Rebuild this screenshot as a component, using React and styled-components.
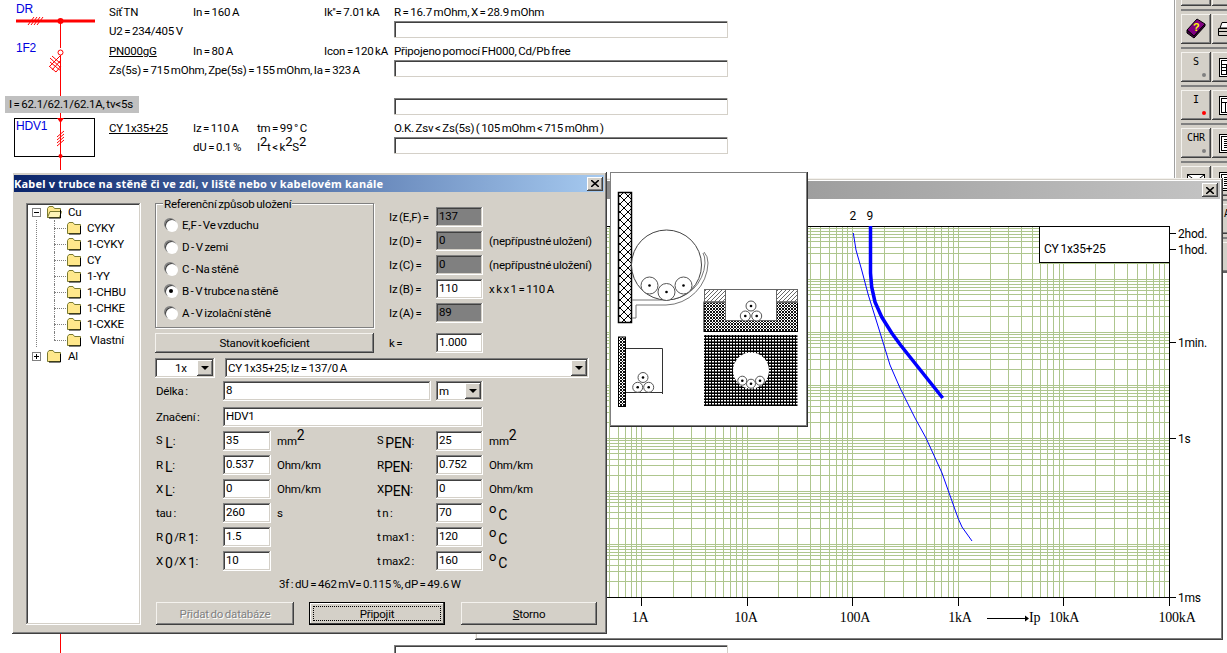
import React from "react";
import styled, { createGlobalStyle } from "styled-components";

const GlobalStyle = createGlobalStyle`
  html, body {
    margin: 0;
    width: 1227px;
    height: 653px;
    overflow: hidden;
    background: #fff;
  }
  * { box-sizing: border-box; }
`;

const FACE = "#d4d0c8";
const RAISED = `inset -1px -1px #404040, inset 1px 1px #f4f2ee, inset -2px -2px #808080, inset 2px 2px ${FACE}`;
const SUNKEN = `inset -1px -1px #fff, inset 1px 1px #808080, inset -2px -2px ${FACE}, inset 2px 2px #404040`;

const Page = styled.div`
  position: relative;
  display: flex;
  width: 1227px;
  height: 653px;
  overflow: hidden;
  background: #fff;
  color: #000;
  font: 11.5px/16px Roboto, "Liberation Sans", Arial, sans-serif;
  letter-spacing: -0.2px;
  word-spacing: -1px;
`;

/* ---------- schema behind the windows ---------- */

const SchemaSvg = styled.svg`
  flex: none;
  display: block;
  width: 109px;
  height: 653px;
`;

const SchemaName = styled.text`
  font: 12px "Liberation Sans", Arial, sans-serif;
  fill: #0000e0;
`;

const CurrentBadge = styled.div`
  position: absolute;
  left: 5px;
  top: 96px;
  width: 134px;
  height: 17px;
  padding-left: 4px;
  background: #c0c0c0;
  line-height: 17px;
  white-space: nowrap;
`;

const SchemaColumn = styled.div`
  flex: none;
  width: 619px;
`;

const SchemaTable = styled.div`
  display: grid;
  grid-template-rows: 39px 38px 39px 39px;
  padding-top: 3px;
`;

const Block = styled.div`
  display: grid;
  grid-template-columns: 84px 64px 67px 70px 334px;
  grid-template-rows: 19px 19px;
  line-height: 19px;
  white-space: nowrap;
`;

const Wide = styled.span`
  grid-column: 1 / 5;
`;

const Cell = styled.span`
  grid-column: ${(p) => p.$col || "auto"};
`;

const LineField = styled.div`
  height: 17px;
  margin-top: -1px;
  background: #fff;
  box-shadow: inset -1px -1px ${FACE}, inset 1px 1px #808080, inset 2px 2px #404040;
  grid-column: 5;
`;

const LastField = styled(LineField)`
  width: 334px;
  margin: 487px 0 0 285px;
`;

const Sup = styled.sup`
  font-size: ${(p) => p.$size || 12}px;
  line-height: 0;
  vertical-align: ${(p) => p.$up || 5}px;
`;

/* ---------- right toolbar ---------- */

const Toolbar = styled.div`
  flex: none;
  width: 53px;
  height: 273px;
  margin-left: auto;
  padding: 0 0 0 6px;
  overflow: hidden;
  background: ${FACE};
  border-left: 1px solid #a0a0a0;
  border-bottom: 2px solid #606060;
  box-shadow: inset 1px 0 #fff;
`;

const ToolRow = styled.div`
  display: flex;
  gap: 1px;
  height: 38px;
  padding: 3px 0 0;
  border-top: 2px solid #808080;
  &:first-child {
    margin-top: -29px;
  }
`;

const ToolButton = styled.div`
  position: relative;
  display: flex;
  flex: none;
  flex-direction: column;
  align-items: center;
  width: 30px;
  height: 30px;
  padding-top: 4px;
  background: ${FACE};
  box-shadow: ${RAISED};
  letter-spacing: 0;
  font: 10px/12px "DejaVu Sans Mono", "Liberation Mono", monospace;
`;

const ToolDot = styled.span`
  position: absolute;
  right: 5px;
  bottom: 5px;
  width: 4px;
  height: 4px;
  border-radius: 50%;
  background: ${(p) => p.$color};
`;

const BookIcon = () => (
  <svg width="22" height="22" viewBox="0 0 22 22" style={{ marginTop: -1 }}>
    <path d="M2 13 L12 2 L20 7 L9 19 Z" fill="#800080" stroke="#000" />
    <path d="M2 13 L2 16 L9 21 L20 9 L20 7 L9 19 Z" fill="#400040" stroke="#000" />
    <text x="8" y="14" fontSize="11" fontWeight="700" fontFamily="Liberation Sans" fill="#ffff00">?</text>
  </svg>
);

const PrinterIcon = () => (
  <svg width="24" height="22" viewBox="0 0 24 22">
    <path d="M7 4.500 H19 L17 10 H5 Z" fill="#fff" stroke="#000" />
    <path d="M3.500 10.500 H21.500 V17.500 H3.500 Z" fill={FACE} stroke="#000" />
    <path d="M4 13.500 H21" stroke="#000" />
    <path d="M14 15.500 H21" stroke="#e0e000" strokeWidth="2" />
  </svg>
);

const SheetIcon = ({ kind }) => (
  <svg width="22" height="22" viewBox="0 0 22 22">
    <rect x="3.5" y="2.5" width="16" height="18" fill="#fff" stroke="#000" />
    <rect x="5.5" y="4.5" width="12" height="14" fill="none" stroke="#000" />
    {kind === "table" && <path d="M6 8.500 H17 M6 11.500 H17 M6 14.500 H17 M10.500 8 V18 M14.500 8 V18" stroke="#000" />}
    {kind === "pi" && <path d="M6 8.500 H17 M9.500 8 V18 M13.500 8 V18" stroke="#000" />}
    {kind === "list" && <path d="M8 7.500 H17 M8 9.500 H17 M8 11.500 H17 M8 13.500 H17 M8 15.500 H17" stroke="#000" />}
  </svg>
);

const MailIcon = () => (
  <svg width="22" height="22" viewBox="0 0 22 22">
    <rect x="2.500" y="4.500" width="17" height="11" fill="#fff" stroke="#000" />
    <path d="M3 5 L11 11 L19 5 M3 15 L9 9 M19 15 L13 9" stroke="#000" fill="none" />
  </svg>
);

const toolRows = [
  [<ToolButton key="a" />, <ToolButton key="b" />],
  [<ToolButton key="a"><BookIcon /></ToolButton>, <ToolButton key="b"><PrinterIcon /></ToolButton>],
  [<ToolButton key="a">S<ToolDot $color="#808080" /></ToolButton>, <ToolButton key="b"><SheetIcon kind="table" /></ToolButton>],
  [<ToolButton key="a">I<ToolDot $color="#ff0000" /></ToolButton>, <ToolButton key="b"><SheetIcon kind="pi" /></ToolButton>],
  [<ToolButton key="a">CHR<ToolDot $color="#808080" /></ToolButton>, <ToolButton key="b"><SheetIcon kind="list" /></ToolButton>],
  [<ToolButton key="a"><MailIcon /></ToolButton>, <ToolButton key="b"><SheetIcon kind="list" /></ToolButton>],
  [<ToolButton key="a" />, <ToolButton key="b">A</ToolButton>],
  [<ToolButton key="a" />, <ToolButton key="b" />],
];

/* ---------- window chrome ---------- */

const ChartWindow = styled.div`
  position: absolute;
  left: 475px;
  top: 178px;
  width: 748px;
  height: 462px;
  padding: 3px;
  background: #fff;
  box-shadow: ${RAISED};
`;

const InactiveTitle = styled.div`
  display: flex;
  justify-content: flex-end;
  align-items: center;
  height: 18px;
  padding-right: 2px;
  background: linear-gradient(90deg, #808080, #c4c4c4);
`;

const CloseButton = styled.button`
  display: flex;
  align-items: center;
  justify-content: center;
  width: 16px;
  height: 14px;
  padding: 0;
  border: 0;
  background: ${FACE};
  box-shadow: inset -1px -1px #404040, inset 1px 1px #fff, inset -2px -2px #808080;
`;

const ChartSvg = styled.svg`
  display: block;
  width: 742px;
  height: 438px;
`;

const AxisLabel = styled.text`
  font: 14px "Liberation Serif", "Times New Roman", serif;
  text-anchor: ${(p) => p.$anchor || "middle"};
`;

const TimeLabel = styled.text`
  font: 12px Roboto, "Liberation Sans", Arial, sans-serif;
`;

const PictureWindow = styled.div`
  position: absolute;
  left: 610px;
  top: 172px;
  width: 198px;
  height: 255px;
  padding: 2px;
  background: #fff;
  box-shadow: inset -1px -1px #303030, inset 1px 1px #808080, inset -2px -2px #808080;
`;

const PictureSvg = styled.svg`
  display: block;
  width: 194px;
  height: 251px;
`;

const Dialog = styled.div`
  position: absolute;
  left: 12px;
  top: 172px;
  width: 595px;
  height: 462px;
  padding: 3px 3px 0 2px;
  background: ${FACE};
  box-shadow: inset -1px -1px #404040, inset 1px 1px #fff, inset -2px -2px #808080;
`;

const ActiveTitle = styled.div`
  display: flex;
  align-items: center;
  justify-content: space-between;
  height: 17px;
  padding: 0 1px 0 0;
  background: linear-gradient(90deg, #0a246a, #a6caf0);
  color: #fff;
  letter-spacing: 0.2px;
  word-spacing: 0;
  font: 700 11px/17px "Noto Sans", Tahoma, sans-serif;
  white-space: nowrap;
`;

const DialogBody = styled.div`
  display: flex;
  gap: 14px;
  padding: 9px 0 0 12px;
`;

/* ---------- tree ---------- */

const Tree = styled.div`
  flex: none;
  width: 115px;
  height: 422px;
  margin-top: 2px;
  padding-top: 1px;
  background: #fff;
  box-shadow: ${SUNKEN};
`;

const TreeRow = styled.div`
  position: relative;
  display: flex;
  align-items: center;
  height: 16px;
  padding-left: ${(p) => (p.$child ? 40 : 20)}px;
  white-space: nowrap;
  background-image: ${(p) => (p.$child ? "linear-gradient(#808080 50%, transparent 0)" : "none")};
  background-size: 1px 2px;
  background-position: 10px 0;
  background-repeat: repeat-y;
  &::before {
    content: "";
    display: ${(p) => (p.$child ? "block" : "none")};
    position: absolute;
    left: 28px;
    top: 0;
    width: 12px;
    height: ${(p) => (p.$last ? 8 : 16)}px;
    border-left: 1px dotted #808080;
  }
  &::after {
    content: "";
    display: ${(p) => (p.$child ? "block" : "none")};
    position: absolute;
    left: 28px;
    top: 8px;
    width: 12px;
    border-top: 1px dotted #808080;
  }
`;

const Expander = styled.span`
  position: absolute;
  left: 6px;
  top: 4px;
  width: 9px;
  height: 9px;
  border: 1px solid #808080;
  background: #fff;
  &::before {
    content: "";
    position: absolute;
    left: 1px;
    top: 3px;
    width: 5px;
    height: 1px;
    background: #000;
  }
  &::after {
    content: "";
    display: ${(p) => (p.$plus ? "block" : "none")};
    position: absolute;
    left: 3px;
    top: 1px;
    width: 1px;
    height: 5px;
    background: #000;
  }
`;

const FolderName = styled.span`
  margin-left: ${(p) => p.$gap}px;
`;

const Folder = ({ open }) => (
  <svg width="16" height="14" viewBox="0 0 16 14">
    <path d="M1.500 3.500 L3 1.500 H7 L8.500 3.500 H14.500 V12.500 H1.500 Z" fill="#ffe88c" stroke="#7a7a30" />
    {open && <path d="M1.500 12.500 L4 6.500 H15.500 L13.500 12.500 Z" fill="#fff4b8" stroke="#7a7a30" />}
    <path d="M14.500 5 V13 H3" stroke="#000" fill="none" />
  </svg>
);

/* ---------- form bits ---------- */

const RightCol = styled.div`
  flex: none;
  width: 442px;
`;

const TopArea = styled.div`
  display: flex;
  gap: 15px;
  height: 152px;
`;

const GroupCol = styled.div`
  flex: none;
  width: 219px;
  padding-top: 2px;
`;

const Group = styled.div`
  position: relative;
  height: 125px;
  padding: 10px 0 0 9px;
  border: 1px solid #808080;
  box-shadow: inset 1px 1px #fff, 1px 1px #fff;
`;

const GroupTitle = styled.span`
  position: absolute;
  left: 7px;
  top: -8px;
  padding: 0 1px;
  background: ${FACE};
`;

const RadioRow = styled.div`
  display: flex;
  align-items: center;
  gap: 5px;
  height: 22px;
  white-space: nowrap;
`;

const Radio = styled.span`
  display: flex;
  align-items: center;
  justify-content: center;
  flex: none;
  width: 12px;
  height: 12px;
  border-radius: 50%;
  background: #fff;
  box-shadow: -1px -1px #808080, 1px 1px #fff, inset 1px 1px 0 #404040;
  &::after {
    content: "";
    display: ${(p) => (p.$on ? "block" : "none")};
    width: 4px;
    height: 4px;
    border-radius: 50%;
    background: #000;
  }
`;

const RaisedButton = styled.button`
  display: block;
  width: ${(p) => p.$w}px;
  height: ${(p) => p.$h}px;
  padding: 0;
  border: 0;
  background: ${FACE};
  color: #000;
  font: inherit;
  letter-spacing: inherit;
  word-spacing: inherit;
  box-shadow: ${RAISED};
`;

const KoefButton = styled(RaisedButton)`
  margin-top: 5px;
`;

const DisabledButton = styled(RaisedButton)`
  color: #808080;
  text-shadow: 1px 1px #fff;
`;

const DefaultButton = styled(RaisedButton)`
  position: relative;
  outline: 1px solid #000;
  outline-offset: -1px;
  box-shadow: inset -2px -2px #404040, inset 2px 2px #fff;
  &::after {
    content: "";
    position: absolute;
    inset: 4px;
    border: 1px dotted #000;
  }
`;

const IzGrid = styled.div`
  display: grid;
  grid-template-columns: 47px 47px auto;
  grid-auto-rows: 20px;
  row-gap: 4px;
  align-items: center;
  padding-top: 6px;
  white-space: nowrap;
`;

const KRow = styled(IzGrid)`
  padding-top: 10px;
`;

const Hint = styled.span`
  padding-left: 6px;
`;

const Field = styled.div`
  width: ${(p) => (p.$w ? `${p.$w}px` : "100%")};
  height: 20px;
  padding: 2px 3px;
  background: ${(p) => (p.$off ? "#808080" : "#fff")};
  box-shadow: ${SUNKEN};
  line-height: 15px;
  white-space: nowrap;
`;

const ComboBox = styled.div`
  display: flex;
  align-items: center;
  justify-content: space-between;
  flex: none;
  width: ${(p) => p.$w}px;
  height: 20px;
  padding: 2px 2px 2px ${(p) => p.$indent || 3}px;
  background: #fff;
  box-shadow: ${SUNKEN};
  white-space: nowrap;
`;

const ComboArrow = styled.span`
  display: flex;
  align-items: center;
  justify-content: center;
  flex: none;
  width: 16px;
  height: 16px;
  background: ${FACE};
  box-shadow: inset -1px -1px #404040, inset 1px 1px #fff, inset -2px -2px #808080;
  &::after {
    content: "";
    border: 4px solid transparent;
    border-top: 4px solid #000;
    border-bottom: 0;
  }
`;

const SelectRow = styled.div`
  display: flex;
  gap: 10px;
  margin-top: 5px;
`;

const FormRow = styled.div`
  display: flex;
  align-items: center;
  margin-top: ${(p) => p.$top}px;
`;

const RowLabel = styled.span`
  flex: none;
  width: 68px;
  padding-left: 1px;
`;

const ParamGrid = styled.div`
  display: grid;
  grid-template-columns: 68px 48px 106px 59px 47px auto;
  grid-auto-rows: 20px;
  row-gap: 4px;
  align-items: center;
  margin-top: 4px;
  white-space: nowrap;
`;

const ParamLabel = styled.span`
  padding-left: 1px;
`;

const Unit = styled.span`
  padding-left: 6px;
`;

const Big = styled.span`
  margin-left: ${(p) => p.$gap ?? 2}px;
  font-size: 14px;
  line-height: 0;
  vertical-align: -3px;
`;

const Summary = styled.div`
  height: 18px;
  margin-top: 4px;
  padding-left: 124px;
  line-height: 18px;
  white-space: nowrap;
`;

const ButtonBar = styled.div`
  display: flex;
  margin: 9px 0 0 1px;
`;

const Spacer = styled.div`
  width: ${(p) => p.$w}px;
  flex: none;
`;

/* ---------- data ---------- */

const folders = ["CYKY", "1-CYKY", "CY", "1-YY", "1-CHBU", "1-CHKE", "1-CXKE", "Vlastní"];

const methods = [
  { text: "E,F - Ve vzduchu" },
  { text: "D - V zemi" },
  { text: "C - Na stěně" },
  { text: "B - V trubce na stěně", on: true },
  { text: "A - V izolační stěně" },
];

const izRows = [
  { label: "Iz (E,F) =", value: "137", off: true },
  { label: "Iz (D) =", value: "0", off: true, hint: "(nepřípustné uložení)" },
  { label: "Iz (C) =", value: "0", off: true, hint: "(nepřípustné uložení)" },
  { label: "Iz (B) =", value: "110", hint: "x k x 1 = 110 A" },
  { label: "Iz (A) =", value: "89", off: true },
];

const deg = (
  <>
    <Sup $size={13} $up={4}>o</Sup><Big>C</Big>
  </>
);

const mm2 = (
  <>
    mm<Sup $size={14}>2</Sup>
  </>
);

const params = [
  { l: <><Sup $size={11} $up={1}>S</Sup><Big $gap={3}>L</Big>:</>, v: "35", u: mm2, r: <><Sup $size={11} $up={1}>S</Sup><Big>PEN</Big>:</>, rv: "25", ru: mm2 },
  { l: <>R<Big>L</Big>:</>, v: "0.537", u: "Ohm/km", r: <>R<Big $gap={0}>PEN</Big>:</>, rv: "0.752", ru: "Ohm/km" },
  { l: <>X<Big>L</Big>:</>, v: "0", u: "Ohm/km", r: <>X<Big $gap={0}>PEN</Big>:</>, rv: "0", ru: "Ohm/km" },
  { l: "tau :", v: "260", u: "s", r: "t n :", rv: "70", ru: deg },
  { l: <>R<Big>0</Big> /R<Big>1</Big>:</>, v: "1.5", r: "t max1 :", rv: "120", ru: deg },
  { l: <>X<Big>0</Big> /X<Big>1</Big>:</>, v: "10", r: "t max2 :", rv: "160", ru: deg },
];

/* ---------- chart ---------- */

const xOf = (amps) => Math.round(641 + 105.6 * Math.log10(amps));
const yOf = (secs) => Math.round(437.5 - 53 * Math.log10(secs));

const gridX = [];
for (let e = -2; e < 5; e++) {
  for (let m = 1; m < 10; m++) gridX.push(xOf(m * 10 ** e));
}
gridX.push(xOf(1e5));

const gridY = [];
for (let e = -3; e < 4; e++) {
  for (let m = 1; m < 10; m++) gridY.push(yOf(m * 10 ** e));
}

const thickCurve = "870.500,226 870.500,273 871.700,287 875,302 881.700,317 891.700,333 900.500,345 910,357 926.700,378 942.700,398";
const thinCurve = "853.300,233 856,250 861.700,270 868.300,295 878.300,327 890,365 900,388 915,418 926,438 942,473 958,518 962,527 972,541";

const xLabels = [
  { x: 640, t: "1A" },
  { x: 746, t: "10A" },
  { x: 855, t: "100A" },
  { x: 960, t: "1kA" },
  { x: 1064, t: "10kA" },
  { x: 1177, t: "100kA" },
];

const yLabels = [
  { y: 233, t: "2hod." },
  { y: 249, t: "1hod." },
  { y: 342, t: "1min." },
  { y: 438, t: "1s" },
  { y: 597, t: "1ms" },
];

const Chart = () => (
  <ChartSvg viewBox="478 199 742 438">
    <g stroke="#aec68e" shapeRendering="crispEdges">
      {gridX.filter((x) => x > 478 && x < 1169).map((x) => (
        <line key={x} x1={x + 0.5} x2={x + 0.5} y1="226" y2="597" />
      ))}
      {gridY.map((y) => (
        <line key={y} x1="478" x2="1169" y1={y + 0.5} y2={y + 0.5} />
      ))}
    </g>
    <path d="M478 226.500 H1169.500 V597.500 H478" fill="none" stroke="#000" shapeRendering="crispEdges" />
    {[1, 10, 100, 1000, 10000, 100000].map((a) => (
      <line key={a} x1={xOf(a) + 0.5} x2={xOf(a) + 0.5} y1="597" y2="606" stroke="#000" shapeRendering="crispEdges" />
    ))}
    {yLabels.map((l) => (
      <g key={l.t}>
        <line x1="1169" x2="1176" y1={l.y + 0.5} y2={l.y + 0.5} stroke="#000" shapeRendering="crispEdges" />
        <TimeLabel x="1178" y={l.y + 5}>{l.t}</TimeLabel>
      </g>
    ))}
    {xLabels.map((l) => (
      <AxisLabel key={l.t} x={l.x} y="622">{l.t}</AxisLabel>
    ))}
    <path d="M987 618.500 H1025" stroke="#000" shapeRendering="crispEdges" />
    <path d="M1025 615.500 L1029 618.500 L1025 621.500 Z" fill="#000" />
    <AxisLabel x="1029" y="622" $anchor="start">Ip</AxisLabel>
    <TimeLabel x="849.500" y="220">2</TimeLabel>
    <TimeLabel x="866.500" y="220">9</TimeLabel>
    <polyline points={thinCurve} fill="none" stroke="#0000ff" />
    <polyline points={thickCurve} fill="none" stroke="#0000ff" strokeWidth="3.500" strokeLinejoin="round" />
    <rect x="1039.500" y="226.500" width="130" height="36" fill="#fff" stroke="#000" shapeRendering="crispEdges" />
    <TimeLabel x="1044" y="253">CY 1x35+25</TimeLabel>
  </ChartSvg>
);

const Core = ({ x, y, r }) => (
  <g>
    <circle cx={x} cy={y} r={r} fill="#fff" stroke="#555" />
    <circle cx={x} cy={y} r="1.300" fill="#000" />
  </g>
);

const Picture = () => (
  <PictureSvg viewBox="612 174 194 251">
    <defs>
      <pattern id="wall" width="8" height="8" patternUnits="userSpaceOnUse">
        <path d="M0 0 L8 8 M8 0 L0 8" stroke="#000" />
      </pattern>
      <pattern id="fine" width="3" height="3" patternUnits="userSpaceOnUse">
        <path d="M0 0 L3 3 M3 0 L0 3" stroke="#111" />
      </pattern>
      <pattern id="diag" width="4" height="4" patternUnits="userSpaceOnUse">
        <path d="M0 4 L4 0" stroke="#666" />
      </pattern>
      <pattern id="mesh" width="3" height="3" patternUnits="userSpaceOnUse">
        <rect width="3" height="3" fill="#000" />
        <rect x="1" y="1" width="2" height="1.400" fill="#fff" />
      </pattern>
    </defs>
    <rect x="618.500" y="192.500" width="13" height="130" fill="url(#wall)" stroke="#000" strokeWidth="1.500" />
    <path d="M632 300 H666 A39 39 0 0 0 705 263 Q705 256 703 253 M632 318 H636 V305 H666 A43 43 0 0 0 708 263 Q708 256 704 252" fill="none" stroke="#777" />
    <circle cx="666.500" cy="265" r="35" fill="#fff" stroke="#444" />
    <Core x={649.500} y={285.500} r={8.500} />
    <Core x={666.500} y={292} r={8.500} />
    <Core x={683.500} y={285.500} r={8.500} />

    <rect x="618.500" y="337" width="7" height="69.500" fill="url(#fine)" stroke="#000" />
    <path d="M626 348.500 H662.500 V394 M626 392.500 H662.500" fill="none" stroke="#333" />
    <Core x={643} y={377.500} r={5} />
    <Core x={637.700} y={387.300} r={5} />
    <Core x={648.700} y={387.300} r={5} />

    <rect x="704" y="302" width="93.500" height="29.500" fill="url(#fine)" stroke="#000" />
    <rect x="704.500" y="289.500" width="21" height="13" fill="url(#diag)" stroke="#666" />
    <rect x="776.500" y="289.500" width="21" height="13" fill="url(#diag)" stroke="#666" />
    <rect x="725.500" y="289.500" width="51" height="31" fill="#fff" stroke="#666" />
    <Core x={751} y={306} r={5} />
    <Core x={745.300} y={316} r={5} />
    <Core x={756.700} y={316} r={5} />

    <rect x="704" y="335" width="93.500" height="71" fill="url(#mesh)" />
    <circle cx="751" cy="370.500" r="18" fill="#fff" />
    <Core x={742.300} y={380.700} r={4.500} />
    <Core x={751} y={383.700} r={4.500} />
    <Core x={760} y={380.700} r={4.500} />
  </PictureSvg>
);

const CloseX = () => (
  <svg width="8" height="7" viewBox="0 0 8 7">
    <path d="M0 0 L8 7 M8 0 L0 7" stroke="#000" strokeWidth="1.600" />
  </svg>
);

export default function App() {
  return (
    <Page>
      <GlobalStyle />

      <SchemaSvg viewBox="0 0 109 653">
        <path d="M60.500 21 V48 M60.500 55 V96 M60.500 113 V170 M60.500 634 V653" stroke="#f00" fill="none" />
        <path d="M16 21 H95" stroke="#f00" strokeWidth="3" />
        <circle cx="60.500" cy="21" r="3" fill="#f00" />
        <circle cx="60.500" cy="52.500" r="2.500" fill="#fff" stroke="#f00" />
        <path d="M28 25 L34 17 M31 25 L37 17 M34 25 L40 17 M37 25 L43 17" stroke="#f00" />
        <path d="M50 58 L60 67 M50 62 L61 71 M52 56 L60 63 M49 66 L56 72 M50 66 L60 56 M52 70 L61 60 M56 72 L61 66" stroke="#f00" />
        <path d="M57 137 L64 131 M57 140 L64 134 M57 143 L64 137 M57 146 L64 140" stroke="#f00" />
        <rect x="14.500" y="118.500" width="80" height="38" fill="none" stroke="#000" />
        <path d="M57 118 H64 L60.500 123 Z" fill="#f00" />
        <circle cx="60.500" cy="156" r="2" fill="#f00" />
        <path d="M60.500 118 V156" stroke="#f00" />
        <SchemaName x="16" y="13">DR</SchemaName>
        <SchemaName x="16" y="52">1F2</SchemaName>
        <SchemaName x="16" y="130">HDV1</SchemaName>
      </SchemaSvg>
      <CurrentBadge>I = 62.1/62.1/62.1A, tv&lt;5s</CurrentBadge>

      <SchemaColumn>
        <SchemaTable>
          <Block>
            <span>Síť TN</span>
            <span>In = 160 A</span>
            <span />
            <span>Ik''= 7.01 kA</span>
            <span>R = 16.7 mOhm, X = 28.9 mOhm</span>
            <Wide>U2 = 234/405 V</Wide>
            <LineField />
          </Block>
          <Block>
            <u>PN000gG</u>
            <span>In = 80 A</span>
            <span />
            <span>Icon = 120 kA</span>
            <span>Připojeno pomocí FH000, Cd/Pb free</span>
            <Wide>Zs(5s) = 715 mOhm, Zpe(5s) = 155 mOhm, Ia = 323 A</Wide>
            <LineField />
          </Block>
          <Block>
            <Wide />
            <span />
            <Wide />
            <LineField />
          </Block>
          <Block>
            <u>CY 1x35+25</u>
            <span>Iz = 110 A</span>
            <span>tm = 99 ° C</span>
            <span />
            <span>O.K. Zsv &lt; Zs(5s) ( 105 mOhm &lt; 715 mOhm )</span>
            <Cell $col="2">dU = 0.1 %</Cell>
            <Cell $col="3 / 5">
              I<Sup $size={13}>2</Sup>t &lt; k<Sup $size={13}>2</Sup>S<Sup $size={13}>2</Sup>
            </Cell>
            <LineField />
          </Block>
        </SchemaTable>
        <LastField />
      </SchemaColumn>

      <Toolbar>
        {toolRows.map((row, i) => (
          <ToolRow key={i}>{row}</ToolRow>
        ))}
      </Toolbar>

      <ChartWindow>
        <InactiveTitle>
          <CloseButton><CloseX /></CloseButton>
        </InactiveTitle>
        <Chart />
      </ChartWindow>

      <PictureWindow>
        <Picture />
      </PictureWindow>

      <Dialog>
        <ActiveTitle>
          Kabel v trubce na stěně či ve zdi, v liště nebo v kabelovém kanále
          <CloseButton><CloseX /></CloseButton>
        </ActiveTitle>
        <DialogBody>
          <Tree>
            <TreeRow>
              <Expander />
              <Folder open />
              <FolderName $gap={6}>Cu</FolderName>
            </TreeRow>
            {folders.map((name, i) => (
              <TreeRow key={name} $child $last={i === folders.length - 1}>
                <Folder />
                <FolderName $gap={name === "Vlastní" ? 8 : 5}>{name}</FolderName>
              </TreeRow>
            ))}
            <TreeRow>
              <Expander $plus />
              <Folder />
              <FolderName $gap={6}>Al</FolderName>
            </TreeRow>
          </Tree>

          <RightCol>
            <TopArea>
              <GroupCol>
                <Group>
                  <GroupTitle>Referenční způsob uložení</GroupTitle>
                  {methods.map((m) => (
                    <RadioRow key={m.text}>
                      <Radio $on={m.on} />
                      {m.text}
                    </RadioRow>
                  ))}
                </Group>
                <KoefButton $w={219} $h={20}>Stanovit koeficient</KoefButton>
              </GroupCol>
              <div>
                <IzGrid>
                  {izRows.map((r) => (
                    <React.Fragment key={r.label}>
                      <span>{r.label}</span>
                      <Field $off={r.off}>{r.value}</Field>
                      <Hint>{r.hint}</Hint>
                    </React.Fragment>
                  ))}
                </IzGrid>
                <KRow>
                  <span>k =</span>
                  <Field>1.000</Field>
                </KRow>
              </div>
            </TopArea>

            <SelectRow>
              <ComboBox $w={60} $indent={20}>1x<ComboArrow /></ComboBox>
              <ComboBox $w={364}>CY 1x35+25; Iz = 137/0 A<ComboArrow /></ComboBox>
            </SelectRow>

            <FormRow $top={3}>
              <RowLabel>Délka :</RowLabel>
              <Field $w={208}>8</Field>
              <Spacer $w={5} />
              <ComboBox $w={47}>m<ComboArrow /></ComboBox>
            </FormRow>

            <FormRow $top={6}>
              <RowLabel>Značení :</RowLabel>
              <Field $w={260}>HDV1</Field>
            </FormRow>

            <ParamGrid>
              {params.map((p) => (
                <React.Fragment key={p.v + p.rv}>
                  <ParamLabel>{p.l}</ParamLabel>
                  <Field>{p.v}</Field>
                  <Unit>{p.u}</Unit>
                  <span>{p.r}</span>
                  <Field>{p.rv}</Field>
                  <Unit>{p.ru}</Unit>
                </React.Fragment>
              ))}
            </ParamGrid>

            <Summary>3f : dU = 462 mV= 0.115 %, dP = 49.6 W</Summary>

            <ButtonBar>
              <DisabledButton $w={138} $h={23}>Přidat do databáze</DisabledButton>
              <Spacer $w={15} />
              <DefaultButton $w={136} $h={23}>Připojit</DefaultButton>
              <Spacer $w={16} />
              <RaisedButton $w={136} $h={23}><u>S</u>torno</RaisedButton>
            </ButtonBar>
          </RightCol>
        </DialogBody>
      </Dialog>
    </Page>
  );
}
